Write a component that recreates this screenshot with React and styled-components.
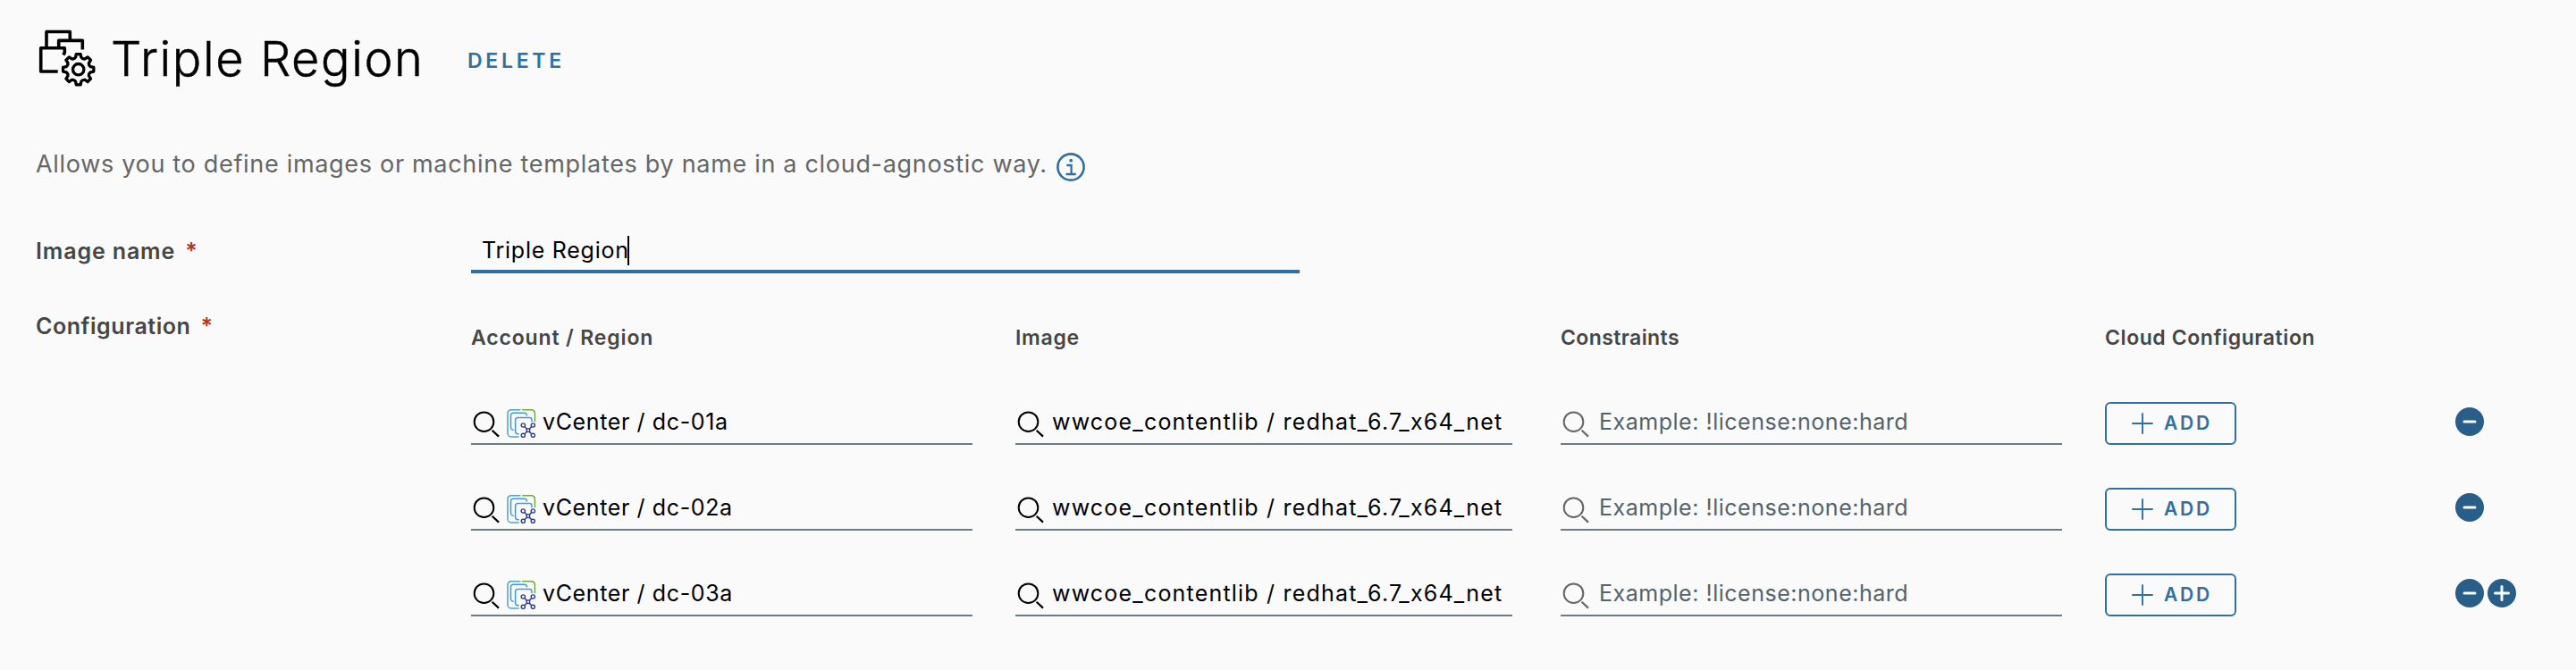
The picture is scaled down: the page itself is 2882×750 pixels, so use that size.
import React from "react";
import styled, { createGlobalStyle } from "styled-components";

const blue = "#2f70a2";

const GlobalStyle = createGlobalStyle`
  body {
    margin: 0;
    background: #fafafa;
    color: #000;
    font-family: Inter, "Liberation Sans", sans-serif;
  }
  * { box-sizing: border-box; }
  svg { display: block; flex: none; fill: none; }
`;

const Page = styled.main`
  min-height: 750px;
  padding-left: 40px;
  background: #fafafa;
`;

const Header = styled.header`
  display: flex;
  align-items: center;
  height: 131px;
`;

const Title = styled.h1`
  width: 399px;
  margin: 0 0 0 12px;
  font-size: 54px;
  font-weight: 300;
  line-height: 66px;
  letter-spacing: 1.64px;
  white-space: nowrap;
  -webkit-text-stroke: 0.5px #000;
`;

const DeleteButton = styled.button`
  padding: 4px 0 0;
  border: 0;
  background: none;
  color: ${blue};
  font: 600 23px/28px Inter, sans-serif;
  letter-spacing: 3.7px;
`;

const Description = styled.p`
  display: flex;
  align-items: center;
  gap: 10px;
  height: 40px;
  margin: 32px 0 53px;
  color: #666;
  font-size: 27px;
  letter-spacing: 0.69px;
  white-space: nowrap;

  svg { margin-top: 8px; }
`;

const FormRow = styled.div`
  display: grid;
  grid-template-columns: 487px auto;
  align-items: start;
  justify-content: start;
  margin-bottom: 48px;
`;

const Label = styled.label`
  color: #464646;
  font-size: 25px;
  font-weight: 600;
  line-height: ${(p) => p.$line}px;
  letter-spacing: ${(p) => p.$spacing}px;
`;

const Required = styled.span`
  margin-left: 11px;
  color: #bd3420;
`;

const NameField = styled.div`
  display: flex;
  align-items: center;
  width: 927px;
  height: 50px;
  padding: 2px 0 0 12px;
  border-bottom: 4px solid ${blue};
  font-size: 25px;
  letter-spacing: 0.75px;
`;

const Caret = styled.span`
  width: 2px;
  height: 33px;
  margin-left: -2px;
  background: #000;
`;

const ConfigGrid = styled.div`
  display: grid;
  grid-template-columns: 609px 610px 609px 392px auto;
  grid-auto-rows: 48px;
  row-gap: 48px;
`;

const ColumnHeader = styled.div`
  color: #464646;
  font-size: 23px;
  font-weight: 600;
  line-height: 48px;
  letter-spacing: ${(p) => p.$spacing}px;
`;

const SearchField = styled.div`
  display: flex;
  align-items: center;
  width: ${(p) => p.$width}px;
  height: 48px;
  padding: 0 0 3px 2px;
  border-bottom: 2px solid #6d7b83;
  font-size: 25px;
  color: ${(p) => (p.$placeholder ? "#54636b" : "#000")};
`;

const FieldText = styled.span`
  width: ${(p) => p.$width}px;
  margin-left: ${(p) => p.$gap}px;
  overflow: hidden;
  line-height: 42px;
  letter-spacing: ${(p) => p.$spacing}px;
  white-space: nowrap;
`;

const Glyph = styled.svg`
  margin: ${(p) => p.$top}px 0 0 ${(p) => p.$left || 0}px;
`;

const AddButton = styled.button`
  display: flex;
  align-items: center;
  gap: 12px;
  width: 147px;
  height: 48px;
  padding: 0 0 0 28px;
  border: 2px solid ${blue};
  border-radius: 6px;
  background: none;
  color: ${blue};
  font: 600 21px/28px Inter, sans-serif;
  letter-spacing: 2.8px;
`;

const RowActions = styled.div`
  display: flex;
  gap: 4px;
  padding-top: 6px;
`;

const RoundButton = styled.button`
  width: 32px;
  height: 32px;
  padding: 0;
  border: 0;
  border-radius: 50%;
  background: #285e87;
`;

const gearPath = (() => {
  const point = (radius, degrees) => {
    const a = ((degrees - 90) * Math.PI) / 180;
    return `${(47.7 + radius * Math.cos(a)).toFixed(2)} ${(47.7 + radius * Math.sin(a)).toFixed(2)}`;
  };
  let d = "";
  for (let i = 0; i < 8; i += 1) {
    const c = i * 45;
    d += `${i ? "L" : "M"}${point(17.3, c - 8)}L${point(17.3, c + 8)}L${point(13.9, c + 13)}Q${point(12.2, c + 22.5)} ${point(13.9, c + 32)}`;
  }
  return `${d}Z`;
})();

const ImageMappingIcon = () => (
  <svg width="72" height="72" viewBox="0 0 72 72" stroke="#000" strokeWidth="3.6" strokeLinejoin="round">
    <path d="M12 22V5.5H38.3V14.5M25.7 22V15.4H52.3V25.5M24.7 50H5.7V23.7H32.3V29L30.8 31.5" />
    <path d={gearPath} strokeWidth="3.3" />
    <circle cx="47.7" cy="47.7" r="6.2" strokeWidth="3.3" />
  </svg>
);

const InfoIcon = () => (
  <svg width="32" height="32" viewBox="0 0 32 32" stroke={blue} strokeWidth="2.6">
    <circle cx="16" cy="16" r="14.6" />
    <path d="M12.2 14H16.6V23.8M11.4 24H21" strokeWidth="2.3" strokeLinecap="round" />
    <circle cx="16.2" cy="8.7" r="1.9" fill={blue} stroke="none" />
  </svg>
);

const SearchIcon = ({ color = "#000" }) => (
  <Glyph $top={7} width="30" height="30" viewBox="0 0 30 30" stroke={color} strokeWidth="2">
    <circle cx="12.5" cy="12.2" r="10.8" />
    <path d="M21.6 21.8L29 28.6" strokeWidth="2.2" />
  </Glyph>
);

const VCenterIcon = () => (
  <Glyph $top={5} $left={7} width="34" height="34" viewBox="0 0 34 34" strokeWidth="1.5">
    <path d="M16.3 1.7H6A4 4 0 0 0 2 5.7V28A4 4 0 0 0 6 32H14.7" stroke="#4aa7bd" />
    <path d="M18.3 1.7H28.4A4 4 0 0 1 32.4 5.7V15.3" stroke="#71a83b" />
    <path d="M23.5 8.5V8A2.7 2.7 0 0 0 20.8 5.3H8.2A2.7 2.7 0 0 0 5.5 8V21.2A3 3 0 0 0 8.8 24.2M29 15.3V13.2A2.7 2.7 0 0 0 26.3 10.5H13.3A2.7 2.7 0 0 0 10.6 13.2V26A2.7 2.7 0 0 0 13.3 28.7H14.7" stroke="#4796dc" />
    <g stroke="#2d3f8c" strokeWidth="1.4">
      <path d="M20.8 20.5L23.5 23.2M28.8 20.5L26.2 23.2M20.8 28.8L23.5 26.2M28.8 28.8L26.2 26.2" />
      <rect x="23.2" y="23" width="3.4" height="3.4" />
      <circle cx="19.3" cy="19" r="2.1" />
      <circle cx="30.3" cy="19" r="2.1" />
      <circle cx="19.3" cy="30.3" r="2.1" />
      <circle cx="30.3" cy="30.3" r="2.1" />
    </g>
  </Glyph>
);

const PlusIcon = () => (
  <svg width="24" height="24" viewBox="0 0 24 24" stroke={blue} strokeWidth="1.9" strokeLinecap="round">
    <path d="M12 1V23M1 12H23" />
  </svg>
);

const RoundIcon = ({ d }) => (
  <svg width="32" height="32" viewBox="0 0 32 32" stroke="#fafafa" strokeWidth="3" strokeLinecap="round">
    <path d={d} />
  </svg>
);

const rows = ["vCenter / dc-01a", "vCenter / dc-02a", "vCenter / dc-03a"];

function ConfigRow({ region, last }) {
  return (
    <>
      <SearchField $width={561}>
        <SearchIcon />
        <VCenterIcon />
        <FieldText $gap={7} $spacing={0.62}>{region}</FieldText>
      </SearchField>
      <SearchField $width={556}>
        <SearchIcon />
        <FieldText $gap={9} $spacing={1.2} $width={503}>wwcoe_contentlib / redhat_6.7_x64_net</FieldText>
      </SearchField>
      <SearchField $width={561} $placeholder>
        <SearchIcon color="#666" />
        <FieldText $gap={11} $spacing={0.52}>Example: !license:none:hard</FieldText>
      </SearchField>
      <AddButton type="button">
        <PlusIcon />
        ADD
      </AddButton>
      <RowActions>
        <RoundButton type="button" aria-label="Remove row">
          <RoundIcon d="M10 16H22" />
        </RoundButton>
        {last && (
          <RoundButton type="button" aria-label="Add row">
            <RoundIcon d="M8.5 16H23.5M16 8.5V23.5" />
          </RoundButton>
        )}
      </RowActions>
    </>
  );
}

export default function App() {
  return (
    <>
      <GlobalStyle />
      <Page>
        <Header>
          <ImageMappingIcon />
          <Title>Triple Region</Title>
          <DeleteButton type="button">DELETE</DeleteButton>
        </Header>
        <Description>
          Allows you to define images or machine templates by name in a cloud-agnostic way.
          <InfoIcon />
        </Description>
        <FormRow>
          <Label $line={50} $spacing={0.87}>
            Image name<Required>*</Required>
          </Label>
          <NameField>
            Triple Region
            <Caret />
          </NameField>
        </FormRow>
        <FormRow>
          <Label $line={22} $spacing={0.55}>
            Configuration<Required>*</Required>
          </Label>
          <ConfigGrid>
            <ColumnHeader $spacing={0.85}>Account / Region</ColumnHeader>
            <ColumnHeader $spacing={0.7}>Image</ColumnHeader>
            <ColumnHeader $spacing={0.4}>Constraints</ColumnHeader>
            <ColumnHeader $spacing={0.58}>Cloud Configuration</ColumnHeader>
            <span />
            {rows.map((region, i) => (
              <ConfigRow key={region} region={region} last={i === rows.length - 1} />
            ))}
          </ConfigGrid>
        </FormRow>
      </Page>
    </>
  );
}
